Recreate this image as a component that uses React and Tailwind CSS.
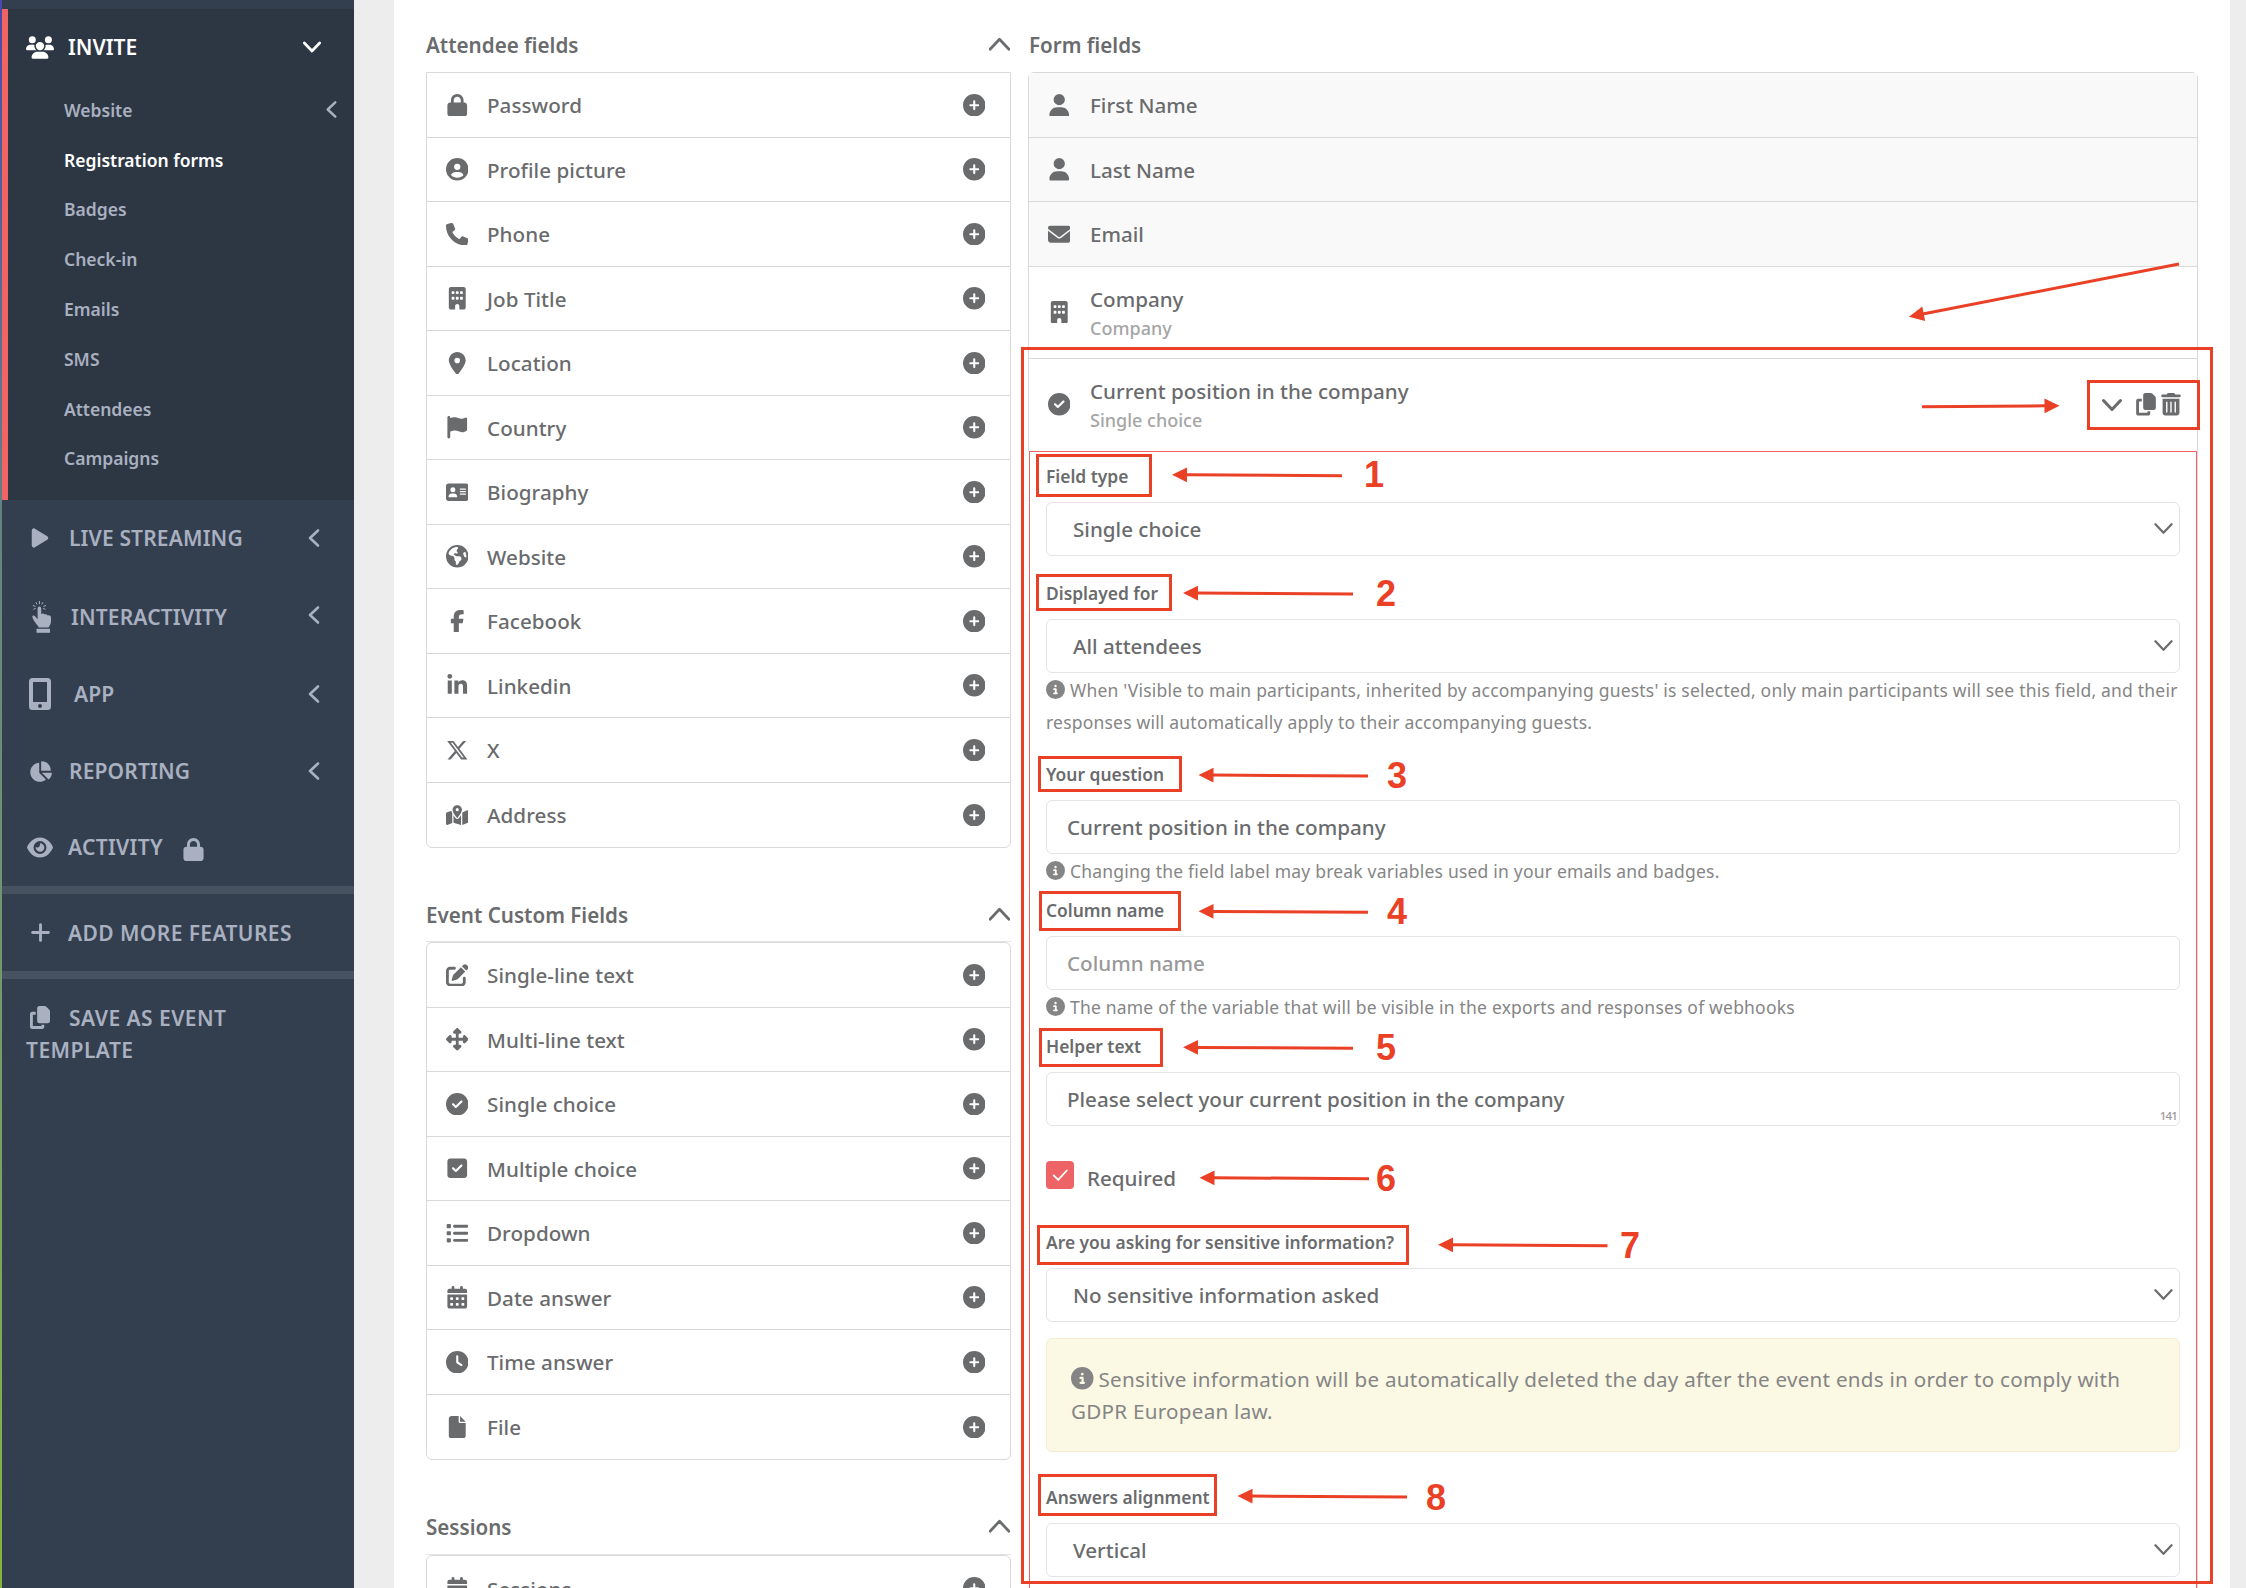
import React from 'react';
import {
    FaUsers, FaPlay, FaChartPie, FaEye, FaLock, FaPlus, FaCopy, FaCircleUser, FaPhone, FaBuilding, FaLocationDot,
    FaFlag, FaAddressCard, FaEarthAmericas, FaFacebookF, FaLinkedinIn, FaXTwitter, FaMapLocationDot, FaPenToSquare,
    FaUpDownLeftRight, FaCircleCheck, FaSquareCheck, FaList, FaCalendarDays, FaClock, FaFile, FaUser, FaEnvelope,
    FaTrashCan, FaCircleInfo, FaCirclePlus,
} from 'react-icons/fa6';

const Chevron = ({ d, className, stroke = 2.6 }) => (
    <svg viewBox="0 0 20 20" fill="none" stroke="currentColor" strokeWidth={stroke} strokeLinecap="round" strokeLinejoin="round" className={className}><path d={d} /></svg>
);
const DOWN = 'M1.5 5.5 10 14.5 18.5 5.5';
const UP = 'M1 14.5 10 5 19 14.5';
const LEFT = 'M14 2.5 6 10 14 17.5';

const HandTap = ({ className }) => (
    <svg viewBox="0 0 20 32" fill="currentColor" className={className}>
        <path d="M5.6 7.2a1.8 1.8 0 0 1 3.6 0v6c.8-.9 2.7-.8 3.2.4 1-.8 2.6-.4 3 .8 1.6-.7 3.6.2 3.6 2v4.2c0 2.4-1.4 4-2.4 5.8H6.8C5.8 24.2 1.8 20.600.4 16.200c-.5-1.600 1.400-2.400 2.400-1.100l2.800 3.200z" />
        <path d="M4.500 27.800h13.500v4H4.500z" />
        <path d="M7.400 0v3.200M3.900 1.300 5 3.400M10.900 1.300 9.800 3.400M.8 4.500l2.600.9M14 4.500l-2.600.9M1.400 8.300l2.200-.8M13.400 8.300l-2.200-.8" stroke="currentColor" strokeWidth="1" />
    </svg>
);

const Tablet = ({ className }) => (
    <svg viewBox="0 0 22 32" className={className}>
        <path fill="currentColor" fillRule="evenodd" d="M3.500 0h15A3.500 3.500 0 0 1 22 3.500v25a3.500 3.500 0 0 1-3.500 3.500h-15A3.500 3.500 0 0 1 0 28.500v-25A3.500 3.500 0 0 1 3.500 0zM4 4v20h14V4zM11 26a2 2 0 1 0 0 4 2 2 0 0 0 0-4z" />
    </svg>
);

const subItems = ['Website', 'Registration forms', 'Badges', 'Check-in', 'Emails', 'SMS', 'Attendees', 'Campaigns'];

const sections = [
    { label: 'LIVE STREAMING', row: 'h-[76px]', icon: <FaPlay className="h-[22px] w-auto" />, text: 'ml-[15px]' },
    { label: 'INTERACTIVITY', row: 'h-[82px]', icon: <HandTap className="ml-1 h-[32px] w-[20px]" />, text: 'ml-[17px]', chevron: '-mt-1' },
    { label: 'APP', row: 'h-[72px]', icon: <Tablet className="h-[32px] w-[22px]" />, text: 'ml-[20px]' },
    { label: 'REPORTING', row: 'h-[82px]', icon: <FaChartPie className="h-[23px] w-auto" />, text: 'ml-[15px]' },
];

const attendeeFields = [
    [FaLock, 'Password'], [FaCircleUser, 'Profile picture'], [FaPhone, 'Phone'], [FaBuilding, 'Job Title'],
    [FaLocationDot, 'Location'], [FaFlag, 'Country'], [FaAddressCard, 'Biography'], [FaEarthAmericas, 'Website'],
    [FaFacebookF, 'Facebook'], [FaLinkedinIn, 'Linkedin'], [FaXTwitter, 'X'], [FaMapLocationDot, 'Address'],
];
const customFields = [
    [FaPenToSquare, 'Single-line text'], [FaUpDownLeftRight, 'Multi-line text'], [FaCircleCheck, 'Single choice'],
    [FaSquareCheck, 'Multiple choice'], [FaList, 'Dropdown'], [FaCalendarDays, 'Date answer'], [FaClock, 'Time answer'], [FaFile, 'File'],
];

const Sidebar = () => (
    <aside className="w-[352px] shrink-0 bg-[#333f4f] pt-[9px] text-[21px] font-semibold text-[#a9b0c0]">
        <div className="h-[491px] border-l-[6px] border-[#f06464] bg-[#2d3744]">
            <div className="flex h-[76px] items-center pl-[18px] pr-[33px] text-white">
                <FaUsers className="h-[23px] w-[28px]" />
                <span className="ml-[14px] flex-1 pt-px">INVITE</span>
                <Chevron d={DOWN} stroke={3} className="h-[18px] w-[18px]" />
            </div>
            <ul className="text-[17.5px]">
                {subItems.map((item) => (
                    <li key={item} className={`flex h-[49.8px] items-center justify-between pl-[56px] pr-[13px] ${item === 'Registration forms' ? 'text-white' : ''}`}>
                        {item}
                        {item === 'Website' && <Chevron d={LEFT} className="h-[19px] w-[19px]" />}
                    </li>
                ))}
            </ul>
        </div>
        {sections.map((s) => (
            <div key={s.label} className={`flex items-center pl-6 pr-[30px] ${s.row}`}>
                <span className="flex w-7 justify-center">{s.icon}</span>
                <span className={`flex-1 pt-[2px] tracking-[0.15px] ${s.text}`}>{s.label}</span>
                <Chevron d={LEFT} className={`h-[20px] w-[20px] ${s.chevron || ''}`} />
            </div>
        ))}
        <div className="flex h-[74px] items-center pb-[3px] pl-6">
            <FaEye className="h-[23px] w-7" /><span className="ml-[14px] pt-px tracking-[0.3px]">ACTIVITY</span><FaLock className="ml-[19px] mt-1 h-[23px] w-auto" />
        </div>
        <div className="flex h-[93px] items-center border-y-8 border-[#465260] pl-6">
            <span className="flex w-7 justify-center"><FaPlus className="h-[23px] w-auto" /></span><span className="ml-[14px] pt-[2px] tracking-[0.4px]">ADD MORE FEATURES</span>
        </div>
        <div className="pl-6 pr-20 pt-[23px] leading-8 tracking-[0.45px]">
            <FaCopy className="ml-1 mr-[19px] inline h-[23px] w-5 align-[-3px]" />SAVE AS EVENT TEMPLATE
        </div>
    </aside>
);

const SectionTitle = ({ children, className = '' }) => (
    <div className={`flex items-center justify-between ${className}`}>
        <h2 className="pt-[2px] font-semibold">{children}</h2>
        <Chevron d={UP} className="mr-px h-[21px] w-[21px]" />
    </div>
);

const FieldRow = ({ icon: Icon, label }) => (
    <li className="flex h-[64.5px] items-center border-b border-[#d9d9d9] pl-[14px] pr-[25px] last:border-b-0">
        <span className="flex w-8 justify-center"><Icon className="h-[22.5px] w-auto" /></span>
        <span className="ml-[14px] flex-1 pt-[2px] tracking-[0.05px]">{label}</span>
        <FaCirclePlus className="h-[22.5px] w-auto" />
    </li>
);

const FormRow = ({ icon: Icon, label, sub, locked, open, children }) => (
    <div className={`flex items-center border-[#d9d9d9] pl-[14px] ${open ? '' : 'border-b'} ${sub ? 'h-[92px]' : 'h-[64.5px]'} ${locked ? 'bg-[#f9f9f9]' : ''}`}>
        <span className="flex w-8 justify-center"><Icon className="h-[22.5px] w-auto" /></span>
        <div className="ml-[15px] flex-1">
            <div className={sub ? 'leading-[30px]' : 'pt-[2px]'}>{label}</div>
            {sub && <div className="-mb-px pt-px text-[18px] leading-[27px] text-[#a5a5a5]">{sub}</div>}
        </div>
        {children}
    </div>
);

const Label = ({ children, className = '' }) => <div className={`h-[50px] pt-[11px] text-[17.4px] font-semibold leading-[26px] ${className}`}>{children}</div>;

const Select = ({ value }) => (
    <div className="flex h-[54px] items-center justify-between rounded-md border border-[#e4e4e4] pl-[26px] pr-[6px]">
        <span className="pt-px">{value}</span><Chevron d={DOWN} stroke={2.3} className="h-[19px] w-[19px]" />
    </div>
);

const Input = ({ value, muted }) => <div className={`flex h-[54px] items-center rounded-md border border-[#e4e4e4] pl-[20px] pt-px ${muted ? 'text-[#999]' : ''}`}>{value}</div>;

const Help = ({ children }) => (
    <p className="-mb-px pt-px text-[17.5px] font-normal leading-8 tracking-[0.2px] text-[#858585]"><FaCircleInfo className="mr-[5px] inline h-[19px] w-[19px] align-[-2px]" />{children}</p>
);

const FieldEditor = () => (
    <div className="flex-1 border border-b-0 border-[#ee6464] px-4 shadow-[-1px_0_0_#fff]">
        <Label>Field type</Label>
        <Select value="Single choice" />
        <Label className="mt-[13px]">Displayed for</Label>
        <Select value="All attendees" />
        <Help>When 'Visible to main participants, inherited by accompanying guests' is selected, only main participants will see this field, and their<br />responses will automatically apply to their accompanying guests.</Help>
        <Label className="mt-[13px]">Your question</Label>
        <Input value="Current position in the company" />
        <Help>Changing the field label may break variables used in your emails and badges.</Help>
        <Label>Column name</Label>
        <Input value="Column name" muted />
        <Help>The name of the variable that will be visible in the exports and responses of webhooks</Help>
        <Label>Helper text</Label>
        <div className="relative">
            <Input value="Please select your current position in the company" />
            <span className="absolute bottom-[3px] right-[3px] text-[11.5px] leading-[14px] tracking-[-0.8px] text-[#999]">141</span>
        </div>
        <div className="mt-[35px] flex h-[57px]">
            <span className="flex h-[28px] w-[28px] items-center justify-center rounded bg-[#ee6365] text-white">
                <Chevron d="M3 10.5 8 15.5 17.5 5" stroke={2} className="h-[18px] w-[18px]" />
            </span>
            <span className="ml-[13px] mt-[2px]">Required</span>
        </div>
        <Label>Are you asking for sensitive information?</Label>
        <Select value="No sensitive information asked" />
        <div className="mt-4 h-[114px] rounded-md border border-[#f7ecd0] bg-[#fbf8e4] px-[24px] pt-[24px] font-normal leading-8 tracking-[0.27px] text-[#858585]">
            <FaCircleInfo className="mr-[5px] inline h-[22.5px] w-[22.5px] align-[-3px]" />Sensitive information will be automatically deleted the day after the event ends in order to comply with<br />GDPR European law.
        </div>
        <Label className="mt-[21px]">Answers alignment</Label>
        <Select value="Vertical" />
    </div>
);

const boxes = [
    [1021, 347, 2213, 1584], [2087, 380, 2200, 430], [1036, 454, 1152, 497], [1036, 574, 1172, 611], [1038, 756, 1182, 792],
    [1039, 891, 1181, 931], [1039, 1028, 1163, 1067], [1037, 1225, 1409, 1265], [1038, 1474, 1217, 1516],
];

// tip x, tip y, tail x, tail y
const arrows = [
    [1909, 316.7, 2179, 264], [2059.5, 405.7, 1922, 406.7], [1172, 474.7, 1342, 475.7], [1183, 593, 1353, 594],
    [1198.5, 775, 1368, 776], [1198.5, 911.3, 1368, 912.3], [1183, 1047.3, 1353, 1048.3],
    [1199.5, 1177.7, 1369, 1178.7], [1438, 1244.7, 1607.5, 1245.7], [1237.5, 1496, 1407, 1497],
];

// left edge, baseline
const numbers = [[1364, 487], [1376, 606], [1387, 788], [1387, 924], [1376, 1060], [1376, 1191], [1620, 1258], [1426, 1510]];

const Arrow = ({ tipX, tipY, tailX, tailY }) => {
    const length = Math.hypot(tailX - tipX, tailY - tipY);
    const angle = (Math.atan2(tailY - tipY, tailX - tipX) * 180) / Math.PI;
    return (
        <g transform={`translate(${tipX} ${tipY}) rotate(${angle})`}>
            <path d="M0 0 15-7.4v14.8z" />
            <rect x="14" y="-1.5" width={length - 14} height="3" />
        </g>
    );
};

const Annotations = () => (
    <div className="pointer-events-none absolute inset-0">
        {boxes.map(([x1, y1, x2, y2]) => (
            <div key={`${x1}-${y1}`} className="absolute border-[3px] border-[#ea4025]" style={{ left: x1, top: y1, width: x2 - x1, height: y2 - y1 }} />
        ))}
        <svg className="absolute inset-0 h-full w-full" fill="#ea4025">
            {arrows.map(([tipX, tipY, tailX, tailY]) => <Arrow key={tipY} tipX={tipX} tipY={tipY} tailX={tailX} tailY={tailY} />)}
        </svg>
        {numbers.map(([x, y], i) => (
            <span key={y} className="absolute font-['Liberation_Sans',sans-serif] text-[36px] font-bold leading-[36px] text-[#ea4025]" style={{ left: x, top: y - 30 }}>{i + 1}</span>
        ))}
    </div>
);

const App = () => (
    <div className="relative flex h-[1588px] w-[2246px] overflow-hidden bg-[#ededed] font-['Noto_Sans',sans-serif] text-[20.6px] font-medium text-[#6a6b6d]">
        <div className="w-[2px] bg-gradient-to-b from-[#4a48ab] via-[#66857f] via-35% to-[#86b53c]" />
        <Sidebar />
        <main className="ml-10 flex w-[1836px] items-start bg-white pl-8">
            <div className="w-[585px]">
                <SectionTitle className="h-[72px] pt-[17px]">Attendee fields</SectionTitle>
                <ul className="rounded-b-md border border-[#d9d9d9]">{attendeeFields.map(([icon, label]) => <FieldRow key={label} icon={icon} label={label} />)}</ul>
                <SectionTitle className="h-[93px] pt-[40px]">Event Custom Fields</SectionTitle>
                <div className="border-t border-[#e4e4e4]">
                    <ul className="rounded-md border border-[#d9d9d9]">{customFields.map(([icon, label]) => <FieldRow key={label} icon={icon} label={label} />)}</ul>
                </div>
                <SectionTitle className="h-[94px] pt-[38px]">Sessions</SectionTitle>
                <div className="border-t border-[#e4e4e4]">
                    <ul className="rounded-md border border-[#d9d9d9]"><FieldRow icon={FaCalendarDays} label="Sessions" /></ul>
                </div>
            </div>
            <div className="ml-[17px] w-[1170px]">
                <div className="flex h-[72px] items-center pl-px pt-[19px] font-semibold">Form fields</div>
                <div className="flex h-[1600px] flex-col rounded-t-md border border-[#d9d9d9]">
                    <FormRow icon={FaUser} label="First Name" locked />
                    <FormRow icon={FaUser} label="Last Name" locked />
                    <FormRow icon={FaEnvelope} label="Email" locked />
                    <FormRow icon={FaBuilding} label="Company" sub="Company" />
                    <FormRow icon={FaCircleCheck} label="Current position in the company" sub="Single choice" open>
                        <div className="flex items-center pr-4">
                            <Chevron d={DOWN} stroke={3} className="mr-[14px] h-[20px] w-[20px]" /><FaCopy className="mr-[5px] h-[22.5px] w-5" /><FaTrashCan className="h-[22.5px] w-5" />
                        </div>
                    </FormRow>
                    <FieldEditor />
                </div>
            </div>
        </main>
        <Annotations />
    </div>
);

export default App;
